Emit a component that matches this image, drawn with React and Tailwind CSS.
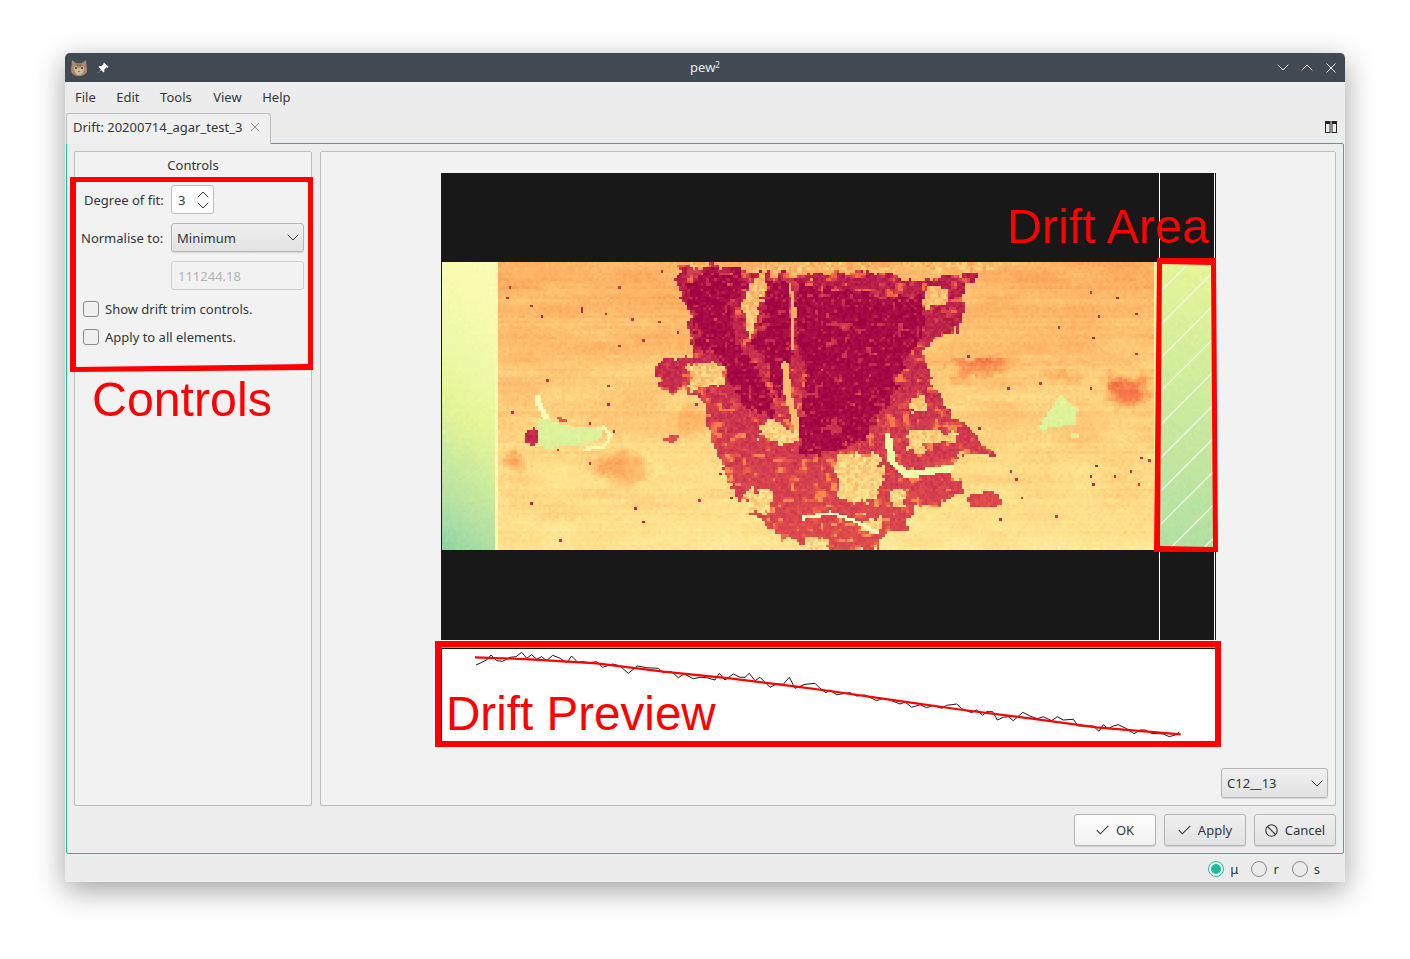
import React from "react";

const STOPS = [[158,1,66],[213,62,79],[244,109,67],[253,174,97],[254,224,139],[255,255,191],[230,245,152],[171,221,164],[102,194,165]];
const colorOf = (v) => {
  const t = Math.max(0, Math.min(0.799, v)) * 10;
  const i = Math.floor(t), f = t - i;
  const a = STOPS[i], b = STOPS[i + 1];
  const c = [0, 1, 2].map((k) => Math.round(a[k] + (b[k] - a[k]) * f));
  return `rgb(${c[0]},${c[1]},${c[2]})`;
};
const hash = (x, y) => { const s = Math.sin(x * 127.1 + y * 311.7) * 43758.5453; return s - Math.floor(s); };
const smooth = (x, y) => {
  const xi = Math.floor(x), yi = Math.floor(y), fx = x - xi, fy = y - yi;
  const u = fx * fx * (3 - 2 * fx), w = fy * fy * (3 - 2 * fy);
  const a = hash(xi, yi), b = hash(xi + 1, yi), c = hash(xi, yi + 1), d = hash(xi + 1, yi + 1);
  return a + (b - a) * u + (c - a) * w + (a - b - c + d) * u * w;
};
const inPoly = (px, py, p) => {
  let c = false;
  for (let i = 0, j = p.length - 1; i < p.length; j = i++) {
    const [xi, yi] = p[i], [xj, yj] = p[j];
    if (yi > py !== yj > py && px < ((xj - xi) * (py - yi)) / (yj - yi) + xi) c = !c;
  }
  return c;
};
const segDist = (px, py, line) => {
  let best = 1e9;
  for (let i = 0; i < line.length - 1; i++) {
    const [ax, ay] = line[i], [bx, by] = line[i + 1];
    const dx = bx - ax, dy = by - ay;
    const t = Math.max(0, Math.min(1, ((px - ax) * dx + (py - ay) * dy) / (dx * dx + dy * dy)));
    const d = Math.hypot(px - ax - t * dx, py - ay - t * dy);
    if (d < best) best = d;
  }
  return best;
};
const box = (x0, y0, x1, y1) => [[x0, y0], [x1, y0], [x1, y1], [x0, y1]];

const MEDIUM = [[676,268],[684,264],[720,264],[748,272],[800,276],[890,270],[900,278],[933,278],[963,277],[968,268],[973,268],[973,280],[963,287],[965,305],[963,328],[943,335],[930,343],[925,355],[932,380],[945,405],[965,425],[983,445],[1000,460],[980,455],[957,455],[950,472],[963,488],[947,502],[917,508],[907,522],[910,535],[883,532],[880,550],[816,550],[769,532],[753,515],[736,495],[723,468],[709,435],[699,395],[656,388],[656,365],[696,355],[689,322],[679,288]];
const DARK = [
  [[796,285],[840,290],[883,296],[923,298],[927,322],[917,342],[903,368],[893,395],[880,415],[857,445],[833,455],[800,452],[800,420],[805,370],[796,340]],
  [[686,285],[705,272],[736,272],[745,290],[730,300],[735,340],[750,360],[770,400],[770,420],[755,412],[735,400],[725,365],[700,345],[690,310]],
  [[768,282],[790,282],[790,360],[782,400],[775,400],[765,360],[752,342],[765,320]],
];
const HOLES = [
  [[768,272],[762,300],[752,338],[744,335],[744,300],[752,280]],
  box(689,362,722,388),
  [[760,422],[775,420],[790,432],[800,425],[797,444],[775,446],[760,438]],
  box(837,456,880,480),
  [[840,478],[887,470],[880,500],[855,505],[840,495]],
  box(907,435,923,452),
  box(913,395,927,412),
  box(923,434,957,442),
  box(923,288,947,305),
  box(893,492,905,505),
  box(746,490,769,512),
  box(805,538,825,550),
  box(860,518,880,530),
  [[756,265],[836,262],[836,270],[800,272],[750,272]],
  [[836,262],[1020,262],[1020,265],[940,268],[880,270],[840,268]],
  box(690,262,712,268),
];
const BANDS = [
  { line: [[785,365],[788,395],[795,420],[797,428]], w: 3.5, v: 0.33 },
  { line: [[790,285],[794,310],[792,348]], w: 1.6, v: 0.3 },
  { line: [[887,435],[892,462],[907,475],[950,468]], w: 3.5, v: 0.56 },
  { line: [[803,518],[830,513],[857,522],[877,533]], w: 1.8, v: 0.49 },
  { line: [[603,427],[611,436],[603,447],[585,449]], w: 1.6, v: 0.47 },
  { line: [[537,398],[545,417]], w: 3, v: 0.49 },
];
const BLOBS = [
  { p: [[533,429],[542,434],[543,443],[533,447],[525,442],[525,434]], v: 0.07 },
  { p: [[662,437],[678,435],[677,443],[672,445]], v: 0.13 },
  { p: [[553,415],[568,420],[570,423],[560,422]], v: 0.16 },
  { p: [[966,496],[985,492],[1000,495],[1000,503],[985,508],[970,506]], v: 0.12 },
];
const GREEN = [
  [[538,418],[556,422],[576,428],[603,427],[603,438],[579,445],[546,448],[539,445]],
  [[1062,395],[1078,410],[1075,425],[1050,427],[1043,432],[1038,427],[1050,410]],
  box(1072,433,1080,439),
];
const PATCHES = [
  [1128,392,26,20,0.15],[1112,382,12,14,0.07],[980,368,32,10,0.1],[962,378,14,12,0.06],[1063,376,24,9,0.06],
  [622,468,32,20,0.1],[515,462,14,12,0.1],[690,420,20,20,0.05],[1040,364,120,3,0.03],[960,362,50,3,0.05],
];

function buildHeat() {
  const X0 = 442, Y0 = 262, W = 773, H = 288, cols = 290, rows = 108;
  const cw = W / cols, ch = H / rows;
  const buckets = new Map();
  for (let r = 0; r < rows; r++) {
    const rowN = (hash(3, r) - 0.5) * 0.022;
    for (let c = 0; c < cols; c++) {
      const x = X0 + (c + 0.5) * cw, y = Y0 + (r + 0.5) * ch;
      const t = (y - Y0) / H;
      const n = hash(c, r) - 0.5;
      const jx = x + (smooth(x / 9, y / 9) - 0.5) * 9 + (smooth(x / 3.5, y / 3.5) - 0.5) * 5;
      const jy = y + (smooth(x / 9 + 40, y / 9 + 7) - 0.5) * 9 + (smooth(x / 3.5 + 9, y / 3.5 + 3) - 0.5) * 5;
      let v;
      if (x < 496) {
        const g = t + (496 - x) / 54 * 0.15;
        v = 0.53 + 0.165 * Math.pow(Math.max(0, g), 1.7) + n * 0.015;
      } else if (x < 499 || (x > 1153 && x < 1158)) {
        v = 0.47 + n * 0.03;
      } else if (x >= 1158) {
        v = 0.6 + 0.09 * t + n * 0.012;
      } else {
        v = 0.305 + 0.11 * t + rowN + n * 0.03 + (smooth(x / 40, y / 12) - 0.5) * 0.045;
        for (const [cx, cy, rx, ry, a] of PATCHES) {
          const d = ((jx - cx) / rx) ** 2 + ((jy - cy) / ry) ** 2;
          if (d < 1) v -= a * (1 - d);
        }
        const spot = hash(c + 91, r + 17);
        if (spot < 0.003) v = 0.04 + spot * 15;
        if (inPoly(jx, jy, MEDIUM)) {
          v = 0.04 + 0.085 * t + n * 0.045;
          const m = smooth(x / 6, y / 5);
          if (m > 0.8) v += 0.14;
          else if (m > 0.68) v += 0.05;
          const inDark = DARK.some((p) => inPoly(jx, jy, p));
          if (inDark) v = 0.012 + n * 0.035 + (m > 0.84 ? 0.07 : 0) + (hash(c + 5, r + 2) > 0.92 ? 0.05 : 0);
        }
        if (HOLES.some((p) => inPoly(jx, jy, p))) v = 0.33 + n * 0.11 + 0.06 * t;
        for (const b of BLOBS) if (inPoly(x + (jx - x) * 0.3, y + (jy - y) * 0.3, b.p)) v = b.v + n * 0.04;
        for (const b of BANDS) if (segDist(x, y, b.line) < b.w) v = b.v + n * 0.015;
        for (const p of GREEN) if (inPoly(x, y, p)) v = 0.6 + n * 0.02 + 0.025 * t;
      }
      const q = Math.round(v * 120) / 120;
      const k = colorOf(q);
      const px = (c * cw).toFixed(1), py = (r * ch).toFixed(1);
      const seg = `M${px} ${py}h${(cw + 0.1).toFixed(2)}v${(ch + 0.1).toFixed(2)}h-${(cw + 0.1).toFixed(2)}z`;
      buckets.set(k, (buckets.get(k) || "") + seg);
    }
  }
  return [...buckets.entries()];
}
const HEAT = buildHeat();

const HATCH = [];
for (let k = 1452; k < 1770; k += 33.3) HATCH.push(k);

const z5 = (a) => a.map(([x, y]) => [430 + x / 3, 630 + y / 3]);
const z6 = (a) => a.map(([x, y]) => [830 + x / 3, 630 + y / 3]);
const pts = (a) => a.map(([x, y]) => `${(x - 442).toFixed(1)},${(y - 649).toFixed(1)}`).join(" ");
const BLACK = [
  ...z5([[138,105],[170,90],[183,75],[200,92],[218,94],[240,82],[258,80],[275,67],[290,85],[305,74],[320,88],[335,80],[350,92],[368,76],[390,85],[410,98],[425,78],[442,96],[460,95],[478,98],[500,95],[518,112],[548,102],[570,108],[595,130],[622,108],[650,113],[685,115],[700,128],[725,125],[745,143],[762,132],[790,146],[810,142],[830,143],[855,150],[868,130],[885,150],[910,132],[930,142],[945,142],[958,130],[975,152],[990,142],[1020,172],[1040,162],[1060,163],[1078,142],[1095,175],[1125,163],[1155,160],[1170,175],[1188,188]]),
  ...z6([[0,180],[20,194],[60,188],[80,198],[105,195],[140,212],[160,205],[180,210],[210,222],[225,216],[245,232],[270,224],[290,233],[310,226],[335,235],[350,226],[380,222],[395,236],[425,248],[440,240],[458,256],[470,245],[488,245],[502,270],[520,262],[535,260],[550,272],[578,247],[600,258],[622,266],[640,260],[665,272],[682,260],[700,270],[730,268],[745,288],[790,288],[807,304],[820,284],[835,296],[850,288],[865,284],[890,296],[912,311],[930,300],[945,300],[965,310],[1000,312],[1018,320],[1035,315],[1048,306]]),
];
const RED = [...z5([[135,82],[300,88],[500,100],[700,125],[900,145],[1100,170]]), ...z6([[0,183],[200,212],[400,240],[600,265],[800,292],[1052,313]])];

const Chevron = ({ up, className = "" }) => (
  <svg width="12" height="7" viewBox="0 0 12 7" className={className} fill="none" stroke="currentColor" strokeWidth="1">
    <path d={up ? "M.7 6.3 6 1l5.3 5.3" : "M.7.7 6 6 11.3.7"} />
  </svg>
);
const Check = () => (
  <svg width="13" height="10" viewBox="0 0 13 10" fill="none" stroke="#31363b" strokeWidth="1.1"><path d="M.8 5.2 4.3 8.8 12.3.8" /></svg>
);
const Combo = ({ label, className }) => (
  <div className={`flex items-center justify-between pl-[5px] pr-[4px] border border-[#b5b5b5] rounded-[3px] bg-gradient-to-b from-[#f0f0f0] to-[#e2e2e2] shadow-[0_1px_1px_rgba(0,0,0,0.12)] ${className}`}>
    <span>{label}</span>
    <Chevron className="text-[#31363b]" />
  </div>
);
const Checkbox = ({ label }) => (
  <div className="flex items-center gap-[6px] h-[16px]">
    <span className="w-[16px] h-[16px] rounded-[3px] border border-[#8a8a8a] bg-[#f0f0f0]" />
    <span>{label}</span>
  </div>
);
const Radio = ({ label, on }) => (
  <div className="flex items-center gap-[6px]">
    <span className={`w-[16px] h-[16px] rounded-full border flex items-center justify-center ${on ? "border-[#1abc9c] bg-white" : "border-[#8a8a8a] bg-[#ececec]"}`}>
      {on && <span className="w-[10px] h-[10px] rounded-full bg-[#1abc9c]" />}
    </span>
    <span>{label}</span>
  </div>
);
const Btn = ({ icon, label, light }) => (
  <div className={`w-[82px] h-[32px] flex items-center justify-center gap-[7px] border border-[#b5b5b5] rounded-[3px] bg-gradient-to-b shadow-[0_1px_1px_rgba(0,0,0,0.12)] ${light ? "from-[#fcfcfc] to-[#f2f2f2]" : "from-[#f0f0f0] to-[#e2e2e2]"}`}>
    {icon}
    <span>{label}</span>
  </div>
);

export default function App() {
  return (
    <div className="relative w-[1410px] h-[959px] bg-white overflow-hidden pt-[53px] pl-[65px] font-['Noto_Sans',sans-serif] text-[13px] leading-[18px] text-[#31363b]">
      <div className="w-[1280px] h-[829px] flex flex-col bg-[#ececec] rounded-t-[5px] shadow-[0_8px_30px_rgba(0,0,0,0.38)]">
        {/* title bar */}
        <div className="h-[29px] flex items-center justify-between bg-[#414a52] rounded-t-[5px] pl-[5px] pr-[9px] text-[#e8eaeb]">
          <div className="flex items-center gap-[9px] w-[108px]">
            <svg width="18" height="18" viewBox="0 0 18 18">
              <path d="M2 1l4 3h6l4-3 1 10c0 4-4 6-8 6s-8-2-8-6z" fill="#a98a6e" />
              <path d="M4 8c2-1 3-1 4 1h2c1-2 2-2 4-1 0 5-2 8-5 8S4 13 4 8z" fill="#d2b79c" />
              <circle cx="6" cy="9" r="1" fill="#3a2a20" />
              <circle cx="12" cy="9" r="1" fill="#3a2a20" />
              <path d="M8 12h2l-1 1.2z" fill="#5d3b2e" />
              <path d="M7 4.500l.5 3M9 4v3M11 4.500l-.5 3" stroke="#6b5140" strokeWidth=".7" />
            </svg>
            <svg width="12" height="12" viewBox="0 0 12 12" fill="#fff"><path d="M7 .5l4.500 4.500-1.200.7-.7-.4-2.400 2.400.2 1.700-1 1L4 7.500 1 11.300.7 11 4.500 8 1.600 5.100l1-1 1.700.2L6.700 1.900 6.300 1.200z" /></svg>
          </div>
          <span className="pb-[2px]">pew<sup className="text-[8px] leading-none">2</sup></span>
          <div className="w-[104px] flex items-center justify-end">
            <Chevron />
            <Chevron up className="ml-[12px]" />
            <svg width="10" height="10" viewBox="0 0 10 10" className="ml-[13px]" fill="none" stroke="currentColor" strokeWidth="1"><path d="M.5.500l9 9M9.500.500l-9 9" /></svg>
          </div>
        </div>
        {/* menu */}
        <div className="h-[30px] flex items-center gap-[20.500px] pl-[10px]">
          <span>File</span><span>Edit</span><span>Tools</span><span className="ml-px">View</span><span>Help</span>
        </div>
        {/* tabs */}
        <div className="h-[31px] flex items-end justify-between pr-[8px] pl-px">
          <div className="w-[205px] h-[31px] -mb-px flex items-center justify-between pl-[6px] pr-[10px] pb-[4px] bg-[#f0f0f0] border border-b-0 border-[#bdbdbd] rounded-t-[3px] z-10">
            <span>Drift: 20200714_agar_test_3</span>
            <svg width="10" height="10" viewBox="0 0 10 10" fill="none" stroke="#8f9397" strokeWidth="1"><path d="M1 1l8 8M9 1l-8 8" /></svg>
          </div>
          <svg width="12" height="12" viewBox="0 0 12 12" className="mb-[10px]" fill="none">
            <path d="M0 0h5.500v12H0zM6.500 0H12v12H6.500z" fill="#232629" />
            <path d="M1 3h3.500v8H1zM7.500 3H11v8H7.500z" fill="#ececec" />
          </svg>
        </div>
        {/* frame */}
        <div className="h-[711px] mx-px border border-[#1abc9c] rounded-[2px] bg-[#ededed] flex flex-col px-[7px] pt-[7px]">
          <div className="flex gap-[8px] h-[655px]">
            <div className="w-[238px] border border-[#bdbdbd] rounded-[2px] bg-[#f2f2f2] flex flex-col">
              <div className="text-center mt-[4px] h-[18px]">Controls</div>
              <div className="grid grid-cols-[96px_1fr] pr-[7px] mt-[11px] items-center">
                <div className="pl-[9px] h-[29px] flex items-center">Degree of fit:</div>
                <div className="h-[29px] w-[43px] flex items-center justify-between pl-[6px] pr-[4px] bg-white border border-[#bdbdbd] rounded-[3px]">
                  <span>3</span>
                  <div className="flex flex-col gap-[4px] text-[#31363b]">
                    <Chevron up />
                    <Chevron />
                  </div>
                </div>
                <div className="pl-[6px] h-[29px] mt-[9px] flex items-center">Normalise to:</div>
                <Combo label="Minimum" className="h-[29px] mt-[9px]" />
                <div className="col-start-2 h-[29px] mt-[9px] flex items-center pl-[6px] border border-[#cfcfcf] rounded-[3px] text-[#b4b4b4] bg-[#f2f2f2] pt-px">111244.18</div>
              </div>
              <div className="flex flex-col gap-[12px] pl-[8px] mt-[11px]">
                <Checkbox label="Show drift trim controls." />
                <Checkbox label="Apply to all elements." />
              </div>
            </div>
            <div className="flex-1 border border-[#bdbdbd] rounded-[2px] bg-[#f2f2f2] flex flex-col pt-[21px]">
              <svg width="775" height="467" viewBox="441 173 775 467" className="block shrink-0 ml-[120px]" shapeRendering="crispEdges">
                <rect x="441" y="173" width="775" height="467" fill="#181818" />
                <g transform="translate(442 262)">
                  {HEAT.map(([c, d]) => <path key={c} d={d} fill={c} />)}
                </g>
                <g stroke="#f4f6e6" strokeWidth="1.300" shapeRendering="auto">
                  {HATCH.map((k) => {
                    const x0 = 1159, x1 = 1214;
                    let a = k - x0, b = k - x1;
                    let xa = x0, xb = x1;
                    if (a > 550) { xa = k - 550; a = 550; }
                    if (b < 262) { xb = k - 262; b = 262; }
                    return <line key={k} x1={xa} y1={a} x2={xb} y2={b} />;
                  })}
                </g>
                <rect x="1159" y="173" width="1" height="467" fill="#fff" />
                <rect x="1214" y="173" width="1" height="467" fill="#fff" />
              </svg>
              <svg width="774" height="94" viewBox="-1 -1 774 94" className="block shrink-0 mt-[8px] ml-[120px]">
                <rect x="-1" y="-1" width="774" height="94" fill="#fff" />
                <path d="M-.5 93V-.5H773" fill="none" stroke="#000" />
                <polyline points={pts(BLACK)} fill="none" stroke="#1a1a1a" strokeWidth="1" />
                <polyline points={pts(RED)} fill="none" stroke="#f00" strokeWidth="2.200" />
              </svg>
              <div className="flex-1 w-full flex items-end justify-end pr-[7px] pb-[7px]">
                <Combo label="C12__13" className="w-[107px] h-[30px]" />
              </div>
            </div>
          </div>
          <div className="flex justify-end gap-[8px] mt-[8px]">
            <Btn light label="OK" icon={<Check />} />
            <Btn label="Apply" icon={<Check />} />
            <Btn label="Cancel" icon={
              <svg width="13" height="13" viewBox="0 0 13 13" fill="none" stroke="#31363b" strokeWidth="1.100"><circle cx="6.500" cy="6.500" r="5.700" /><path d="M2.500 2.500l8 8" /></svg>
            } />
          </div>
        </div>
        {/* status */}
        <div className="flex-1 flex items-center justify-end gap-[13px] pr-[25px] pt-px">
          <Radio on label="μ" />
          <Radio label="r" />
          <Radio label="s" />
        </div>
      </div>

      {/* red annotations drawn over the screenshot */}
      <svg width="1410" height="959" viewBox="0 0 1410 959" className="absolute inset-0 pointer-events-none" fillRule="evenodd">
        <path fill="#f00" d="M70 177H313V370L70 372ZM76 182V367L308 364V182Z" />
        <path fill="#f00" d="M1157 258H1216L1218 552H1154ZM1162 264L1160 546 1213 547 1211 265Z" />
        <path fill="#f00" d="M435 641H1221V747H435ZM441.500 647.500V741H1215V647.500Z" />
      </svg>
      <span className="absolute left-[92px] top-[375px] font-['Liberation_Sans',sans-serif] text-[48.300px] leading-[48px] text-[#f00] whitespace-nowrap">Controls</span>
      <span className="absolute left-[1007px] top-[202px] font-['Liberation_Sans',sans-serif] text-[48.500px] leading-[48px] text-[#f00] whitespace-nowrap">Drift Area</span>
      <span className="absolute left-[446px] top-[690px] font-['Liberation_Sans',sans-serif] text-[47.600px] leading-[48px] text-[#f00] whitespace-nowrap">Drift Preview</span>
    </div>
  );
}
